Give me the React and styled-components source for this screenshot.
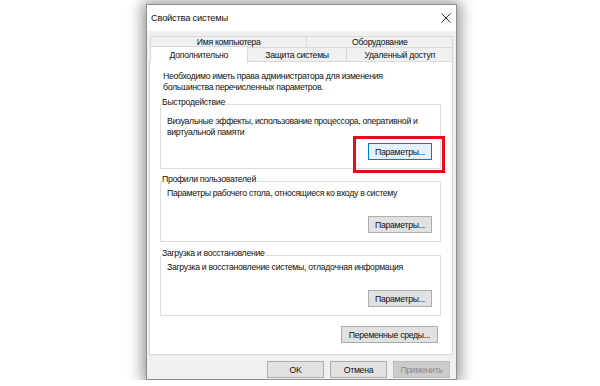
import React from 'react'
import styled, { createGlobalStyle } from 'styled-components'

const GlobalStyle = createGlobalStyle`
body{
  margin:0;
  background:#fff;
  font-family:"Liberation Sans", Arial, sans-serif;
  font-size:8.7px;
  letter-spacing:-0.3px;
  color:#111;
}
`

const Page = styled.div`
padding:4px 0 0 146px;
`

const Window = styled.div`
width:311px;
height:376px;
box-sizing:border-box;
background:#f0f0f0;
border:1px solid #8f8f8f;
box-shadow:0 1px 14px 3px rgba(0,0,0,0.45);
display:flex;
flex-direction:column;
`

const TitleBar = styled.div`
height:26px;
flex:none;
background:#fff;
display:flex;
align-items:center;
justify-content:space-between;
padding:0 5px 0 4px;
`

const Title = styled.span`
font-size:9.4px;
letter-spacing:-0.25px;
line-height:12px;
`

const Close = styled.div`
width:10px;
height:10px;
display:flex;
`

const Body = styled.div`
flex:1;
display:flex;
flex-direction:column;
padding:5px 3px 0 2px;
`

const TabRow = styled.div`
display:flex;
margin-left:1px;
margin-top:${p => p.$first ? '0' : '-1px'};
height:${p => p.$first ? '12px' : '15px'};
`

const Tab = styled.div`
box-sizing:border-box;
width:${p => p.$w}px;
border:1px solid #d9d9d9;
background:${p => p.$active ? '#fff' : '#f0f0f0'};
white-space:nowrap;
display:flex;
align-items:center;
justify-content:center;
position:relative;
z-index:${p => p.$active ? 2 : 1};
${p => p.$active && `
  border-bottom:none;
  margin-top:-1px;
  height:17px;
`}
& + &{
  margin-left:-1px;
}
`

const Panel = styled.div`
box-sizing:border-box;
height:294px;
margin-top:-1px;
background:#fff;
border:1px solid #d9d9d9;
padding:9px 11px 0 10px;
display:flex;
flex-direction:column;
`

const Intro = styled.p`
margin:0 0 0 3px;
line-height:11px;
white-space:nowrap;
`

const Group = styled.div`
box-sizing:border-box;
height:${p => p.$h}px;
margin-top:${p => p.$mt}px;
border:1px solid #dcdcdc;
padding:0 8px 8px 6px;
display:flex;
flex-direction:column;
`

const Legend = styled.span`
align-self:flex-start;
margin:-8px 0 0 -6px;
padding:0 1px;
background:#fff;
line-height:11px;
`

const GroupText = styled.p`
margin:${p => p.$mt}px 0 0;
line-height:11px;
white-space:nowrap;
`

const ButtonRow = styled.div`
margin-top:auto;
display:flex;
justify-content:flex-end;
`

const Button = styled.button`
box-sizing:border-box;
width:${p => p.$w}px;
height:17px;
padding:0;
font:inherit;
letter-spacing:inherit;
white-space:nowrap;
color:${p => p.disabled ? '#8a8a8a' : '#111'};
background:${p => p.disabled ? '#cccccc' : p.$focus ? '#e5f1fb' : '#e1e1e1'};
border:1px solid ${p => p.disabled ? '#bfbfbf' : p.$focus ? '#0078d7' : '#adadad'};
`

const Highlight = styled.div`
position:relative;
display:flex;
&::after{
  content:'';
  position:absolute;
  left:-15px;
  right:-13px;
  top:-7px;
  bottom:-13px;
  border:3px solid #e3101a;
}
`

const EnvRow = styled.div`
display:flex;
justify-content:flex-end;
margin:10px 3px 0 0;
`

const Footer = styled.div`
display:flex;
justify-content:flex-end;
gap:6px;
padding:6px 3px 0 0;
`

const X = () => (
  <svg width="10" height="10" viewBox="0 0 10 10">
    <path d="M0.5 0.5 L9.5 9.5 M9.5 0.5 L0.5 9.5" stroke="#333" strokeWidth="1" fill="none" />
  </svg>
)

export default function App() {
  return (
    <Page>
      <GlobalStyle />
      <Window>
        <TitleBar>
          <Title>Свойства системы</Title>
          <Close><X /></Close>
        </TitleBar>
        <Body>
          <TabRow $first>
            <Tab $w={158}>Имя компьютера</Tab>
            <Tab $w={147}>Оборудование</Tab>
          </TabRow>
          <TabRow>
            <Tab $w={98} $active>Дополнительно</Tab>
            <Tab $w={101}>Защита системы</Tab>
            <Tab $w={107}>Удаленный доступ</Tab>
          </TabRow>
          <Panel>
            <Intro>
              Необходимо иметь права администратора для изменения<br />
              большинства перечисленных параметров.
            </Intro>

            <Group $h={65} $mt={11}>
              <Legend>Быстродействие</Legend>
              <GroupText $mt={8}>
                Визуальные эффекты, использование процессора, оперативной и<br />
                виртуальной памяти
              </GroupText>
              <ButtonRow>
                <Highlight>
                  <Button $w={64} $focus>Параметры...</Button>
                </Highlight>
              </ButtonRow>
            </Group>

            <Group $h={61} $mt={12}>
              <Legend>Профили пользователей</Legend>
              <GroupText $mt={3}>
                Параметры рабочего стола, относящиеся ко входу в систему
              </GroupText>
              <ButtonRow>
                <Button $w={64}>Параметры...</Button>
              </ButtonRow>
            </Group>

            <Group $h={61} $mt={13}>
              <Legend>Загрузка и восстановление</Legend>
              <GroupText $mt={3}>
                Загрузка и восстановление системы, отладочная информация
              </GroupText>
              <ButtonRow>
                <Button $w={64}>Параметры...</Button>
              </ButtonRow>
            </Group>

            <EnvRow>
              <Button $w={97}>Переменные среды...</Button>
            </EnvRow>
          </Panel>
          <Footer>
            <Button $w={57}>OK</Button>
            <Button $w={57}>Отмена</Button>
            <Button $w={57} disabled>Применить</Button>
          </Footer>
        </Body>
      </Window>
    </Page>
  )
}
